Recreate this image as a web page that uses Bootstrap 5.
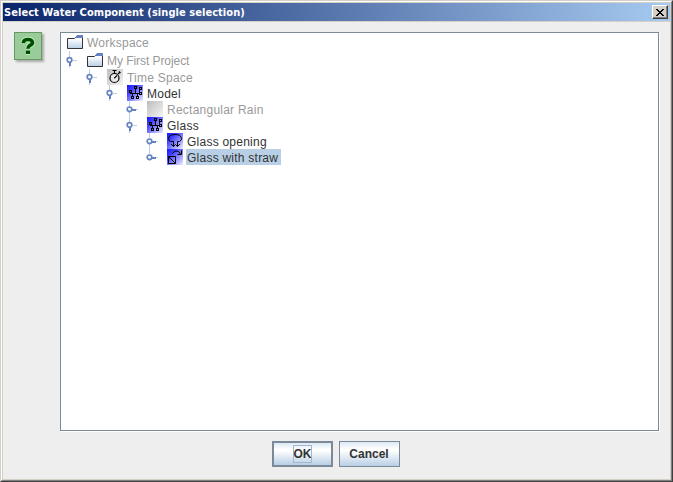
<!DOCTYPE html>
<html lang="en">
<head>
<meta charset="utf-8">
<title>Select Water Component (single selection)</title>
<link href="https://cdn.jsdelivr.net/npm/bootstrap@5.3.0/dist/css/bootstrap.min.css" rel="stylesheet">
<style>
body{margin:0;background:#eee;overflow:hidden;font-family:"Liberation Sans",Arial,sans-serif;font-size:12px;line-height:16px;color:#333}
.win{width:673px;height:482px;border:1px solid;border-color:#d4d0c8 #404040 #404040 #d4d0c8;background:#eee}
.win-in{border:1px solid;border-color:#fff #808080 #808080 #fff}
.win-frame{border:1px solid #d4d0c8}
.title-bar{height:19px;background:linear-gradient(90deg,#0a246a,#a6caf0);border-bottom:1px solid #d4d0c8;color:#fff;font:bold 11px/18px "DejaVu Sans Condensed","DejaVu Sans",sans-serif;padding:0 2px 0 1px}
.title-text{letter-spacing:.05px;padding-top:2px}
.win-x{width:16px;height:14px;background:#d4d0c8;border:1px solid;border-color:#fff #404040 #404040 #fff;box-shadow:inset -1px -1px #808080;padding:0}
.main-area{padding:10px 11px 0 11px}
.ask{width:28px;height:28px;background:#99cc99;border:1px solid #669966;box-shadow:2px 2px 2px #aaa}
.tree-pane{width:599px;height:399px;margin-left:18px;background:#fff;border:1px solid #7a8a99;box-shadow:1px 1px #fff}
.node{height:16px}
.node.tall{height:18px}
.node svg{flex:none}
.dim{color:#999}
.lbl{margin-left:3px;padding-left:1px;height:16px;line-height:18px;letter-spacing:.24px;white-space:nowrap}
.lbl.tight{letter-spacing:-.06px}
.sel{background:#b8cfe5;width:95px}
.btn-row{padding:10px 2px 0 0;gap:6px}
.jbtn{width:61px;height:26px;border:1px solid #7a8a99;border-radius:0;background:linear-gradient(#dde8f3 0,#fff 30%,#fff 35%,#b8cfe5 100%);padding:0;font:bold 12px/16px "Liberation Sans",Arial,sans-serif;color:#333}
.jbtn.main{border-width:2px}
.focus{border:1px solid #a3b8cc;width:19px;height:18px}
</style>
<script src="https://cdn.jsdelivr.net/npm/bootstrap@5.3.0/dist/js/bootstrap.bundle.min.js"></script>
</head>
<body>
<svg width="0" height="0" class="position-absolute" shape-rendering="crispEdges">
<defs>
<linearGradient id="blue" x1="0" y1="0" x2="1" y2="1"><stop offset="0" stop-color="#1414ff"/><stop offset=".3" stop-color="#4040ff"/><stop offset="1" stop-color="#f0f0ff"/></linearGradient>
<linearGradient id="grey" x1="0" y1="0" x2="1" y2="1"><stop offset="0" stop-color="#bdbdbd"/><stop offset="1" stop-color="#f4f4f4"/></linearGradient>
<linearGradient id="fold" x1="0" y1="0" x2="0" y2="1"><stop offset="0" stop-color="#fff"/><stop offset=".3" stop-color="#f4f8fc"/><stop offset="1" stop-color="#b8cfe5"/></linearGradient>
<symbol id="folder" viewBox="0 0 16 18"><path d="M.5 5.500H7.500L9.500 3.500H15.500V15.500H.5Z" fill="url(#fold)" stroke="#333"/><path d="M8 5L10 2H16V5Z" fill="#6382bf"/></symbol>
<symbol id="model" viewBox="0 0 16 16"><path fill="url(#blue)" d="M0 0h16v16H0z"/><path fill="#000" d="M3 8h10v1H3zM8 4h1v5H8zM12 5h1v4h-1zM5 9h1v3H5zM10 9h1v2h-1z"/><path fill="#000" fill-rule="evenodd" d="M7 1h3v3H7zM8 2v1h1V2zM12 2h3v3h-3zM13 3v1h1V3zM2 5h3v3H2zM3 6v1h1V6zM12 7h3v3h-3zM13 8v1h1V8zM4 11h3v3H4zM5 12v1h1v-1zM9 11h3v3H9zM10 12v1h1v-1z"/></symbol>
<symbol id="open" viewBox="0 0 20 16"><path d="M9.500 9V16" stroke="#b8cfe5"/><path d="M13 8.500H17" stroke="#b8cfe5"/><path d="M9 10h1.500v4H9z" fill="#6382bf"/><circle cx="9.500" cy="8" r="2.300" fill="#fff" stroke="#6382bf" stroke-width="1.700" shape-rendering="auto"/></symbol>
<symbol id="shut" viewBox="0 0 20 16"><path d="M12 8.500H18" stroke="#b8cfe5"/><path d="M12 8h4v1.500h-4z" fill="#6382bf"/><circle cx="9.500" cy="8.300" r="2.300" fill="#fff" stroke="#6382bf" stroke-width="1.700" shape-rendering="auto"/></symbol>
</defs>
</svg>
<div class="win"><div class="win-in h-100"><div class="win-frame h-100">
<div class="title-bar d-flex align-items-center justify-content-between"><span class="title-text">Select Water Component (single selection)</span>
<button class="win-x d-flex align-items-center justify-content-center" aria-label="Close"><svg width="8" height="7" viewBox="0 0 8 7" shape-rendering="crispEdges"><path d="M0 0h2v1h1v1h2V1h1V0h2v1H7v1H6v1H5v1h1v1h1v1h1v1H6V6H5V5H3v1H2v1H0V6h1V5h1V4h1V3H2V2H1V1H0z"/></svg></button></div>
<div class="main-area d-flex">
<div class="ask d-flex align-items-center justify-content-center"><svg width="16" height="20" viewBox="0 0 16 20"><path d="M3.500 7V6Q4 3.500 8 3.500T12.500 6.500Q12.500 8.500 9.700 9.500Q8 10.500 8 12.500M5.800 16.300H10.200" fill="none" stroke="#b9f0b9" stroke-width="5.400"/><path d="M3.500 7V6Q4 3.500 8 3.500T12.500 6.500Q12.500 8.500 9.700 9.500Q8 10.500 8 12.800M5.900 16.300H10.100" fill="none" stroke="#004d00" stroke-width="3.600"/></svg></div>
<div class="tree-pane">
<div class="node tall d-flex align-items-center dim"><svg width="6" height="18"></svg><svg width="16" height="18"><use href="#folder"/></svg><span class="lbl">Workspace</span></div>
<div class="node tall d-flex align-items-center dim"><svg width="26" height="18" shape-rendering="crispEdges"><path d="M8.500 0V7" stroke="#b8cfe5"/><use href="#open" x="-1" y="1" width="20" height="16"/></svg><svg width="16" height="18"><use href="#folder"/></svg><span class="lbl tight">My First Project</span></div>
<div class="node d-flex align-items-center dim"><svg width="46" height="16" shape-rendering="crispEdges"><path d="M28.500 0V5" stroke="#b8cfe5"/><use href="#open" x="19" width="20" height="16"/></svg><svg width="16" height="16"><path fill="url(#grey)" d="M0 0h16v16H0z"/><circle cx="7.500" cy="9" r="4.500" fill="#e8e8e8" stroke="#000" stroke-width="1.200"/><path d="M7.500 4V2M5.500 1.500H9.500M7.500 9.500V9L10 6.500M11 5L13 3M12 2.500L13.500 4" fill="none" stroke="#000" stroke-width="1.100"/></svg><span class="lbl">Time Space</span></div>
<div class="node d-flex align-items-center"><svg width="66" height="16" shape-rendering="crispEdges"><path d="M48.500 0V5" stroke="#b8cfe5"/><use href="#open" x="39" width="20" height="16"/></svg><svg width="16" height="16" shape-rendering="crispEdges"><use href="#model"/></svg><span class="lbl">Model</span></div>
<div class="node d-flex align-items-center dim"><svg width="86" height="16" shape-rendering="crispEdges"><path d="M68.500 0V16" stroke="#b8cfe5"/><use href="#shut" x="59" width="20" height="16"/></svg><svg width="16" height="16"><path fill="url(#grey)" d="M0 0h16v16H0z"/></svg><span class="lbl">Rectangular Rain</span></div>
<div class="node d-flex align-items-center"><svg width="86" height="16" shape-rendering="crispEdges"><path d="M68.500 0V5" stroke="#b8cfe5"/><use href="#open" x="59" width="20" height="16"/></svg><svg width="16" height="16" shape-rendering="crispEdges"><use href="#model"/></svg><span class="lbl">Glass</span></div>
<div class="node d-flex align-items-center"><svg width="106" height="16" shape-rendering="crispEdges"><path d="M88.500 0V16" stroke="#b8cfe5"/><use href="#shut" x="79" width="20" height="16"/></svg><svg width="16" height="16"><path fill="url(#blue)" d="M0 0h16v16H0z"/><path d="M6.500 8.500H3.500Q1.500 7.500 1.500 5.500Q2 1.500 8 1.500T14.500 5.500Q14.500 7.500 12.500 8.500H10.500M6.500 8.500V13.500M10.500 8.500V13.500M4 11L6.500 13.500L8.500 11.500L10.500 13.500L13 11" fill="none" stroke="#000"/></svg><span class="lbl">Glass opening</span></div>
<div class="node d-flex align-items-center"><svg width="106" height="16" shape-rendering="crispEdges"><path d="M88.500 0V8" stroke="#b8cfe5"/><use href="#shut" x="79" width="20" height="16"/></svg><svg width="16" height="16"><path fill="url(#blue)" d="M0 0h16v16H0z"/><path d="M1.500 7.500H8.500V14.500H1.500ZM1.500 7.500L8.500 14.500M5.500 4.500Q7 1.500 10 2T13.500 5.500M14.500 1.500V5.500H10.500" fill="none" stroke="#000"/></svg><span class="lbl sel">Glass with straw</span></div>
</div></div>
<div class="btn-row d-flex justify-content-center"><button class="jbtn main d-flex align-items-center justify-content-center"><span class="focus">OK</span></button><button class="jbtn">Cancel</button></div>
</div></div></div>
</body>
</html>
